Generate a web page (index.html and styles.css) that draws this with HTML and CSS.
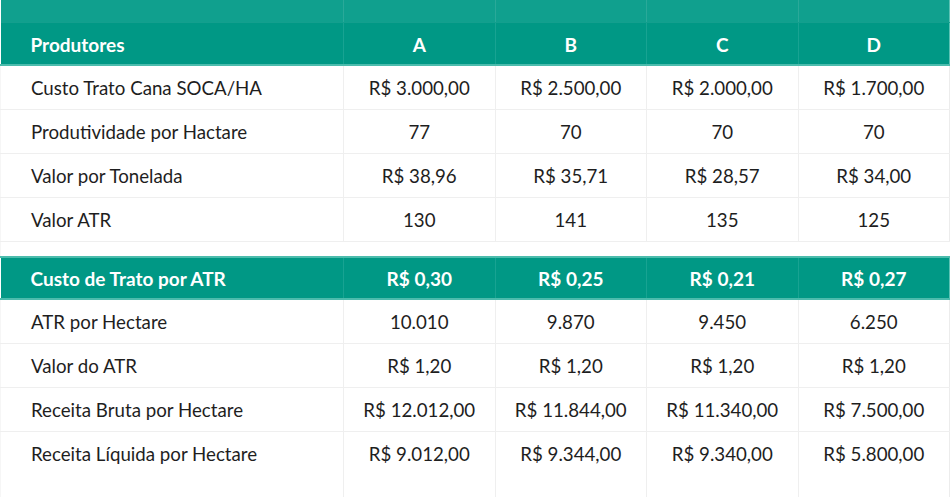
FILE: index.html
```html
<!DOCTYPE html>
<html lang="pt-BR">
<head>
<meta charset="utf-8">
<title>Tabela</title>
<link rel="stylesheet" href="styles.css">
</head>
<body>
<table class="grid">
  <colgroup>
    <col class="c-label">
    <col class="c-val">
    <col class="c-val">
    <col class="c-val">
    <col class="c-val">
  </colgroup>
  <tbody>
    <tr class="strip"><td></td><td></td><td></td><td></td><td></td></tr>
    <tr class="head head-top">
      <td class="label">Produtores</td><td>A</td><td>B</td><td>C</td><td>D</td>
    </tr>
    <tr><td class="label">Custo Trato Cana SOCA/HA</td><td>R$ 3.000,00</td><td>R$ 2.500,00</td><td>R$ 2.000,00</td><td>R$ 1.700,00</td></tr>
    <tr><td class="label">Produtividade por Hactare</td><td>77</td><td>70</td><td>70</td><td>70</td></tr>
    <tr><td class="label">Valor por Tonelada</td><td>R$ 38,96</td><td>R$ 35,71</td><td>R$ 28,57</td><td>R$ 34,00</td></tr>
    <tr class="end"><td class="label">Valor ATR</td><td>130</td><td>141</td><td>135</td><td>125</td></tr>
    <tr class="gap"><td colspan="5"></td></tr>
    <tr class="head head-mid">
      <td class="label">Custo de Trato por ATR</td><td>R$ 0,30</td><td>R$ 0,25</td><td>R$ 0,21</td><td>R$ 0,27</td>
    </tr>
    <tr><td class="label">ATR por Hectare</td><td>10.010</td><td>9.870</td><td>9.450</td><td>6.250</td></tr>
    <tr><td class="label">Valor do ATR</td><td>R$ 1,20</td><td>R$ 1,20</td><td>R$ 1,20</td><td>R$ 1,20</td></tr>
    <tr><td class="label">Receita Bruta por Hectare</td><td>R$ 12.012,00</td><td>R$ 11.844,00</td><td>R$ 11.340,00</td><td>R$ 7.500,00</td></tr>
    <tr class="last"><td class="label">Receita Líquida por Hectare</td><td>R$ 9.012,00</td><td>R$ 9.344,00</td><td>R$ 9.340,00</td><td>R$ 5.800,00</td></tr>
  </tbody>
</table>
</body>
</html>
```
FILE: styles.css
```css
html, body {
  margin: 0;
  padding: 0;
  background: #ffffff;
}

body {
  font-family: Lato, "Open Sans", sans-serif;
  color: #1e1e1e;
  overflow: hidden;
}

.grid {
  width: 949px;
  border-collapse: collapse;
  table-layout: fixed;
  font-size: 18.7px;
}

.c-label { width: 343px; }
.c-val { width: 151.5px; }

.grid td {
  height: 43px;
  padding: 0;
  text-align: center;
  vertical-align: middle;
  border-left: 1px solid #efefef;
  border-bottom: 1px solid #efefef;
  white-space: nowrap;
}

.grid td:first-child {
  border-left: 1px solid #f6f6f6;
}

.grid td:last-child {
  border-right: 1px solid #ececec;
}

.grid td.label {
  text-align: left;
  padding-left: 30px;
}

.strip td {
  height: 22px;
  background: #10a08e;
  border-left: 1px solid #2aa999;
  border-bottom: 1px solid #139f8e;
}

.head td {
  height: 42px;
  background: #009885;
  color: #ffffff;
  font-weight: 700;
  font-size: 19px;
  border-left: 1px solid #18a392;
  border-bottom: 2px solid #4cbcad;
}

.strip + .head td {
  height: 40px;
  padding-top: 1px;
}

.head-mid td {
  border-top: 2px solid #4cbcad;
  height: 40px;
}

.strip td:first-child,
.head td:first-child {
  border-left: none;
}

.grid .strip td:last-child,
.grid .head td:last-child {
  border-right: 1px solid #5cc2b4;
}

.gap td {
  height: 14px;
  border: none;
  background: #ffffff;
}

.grid .gap td:last-child {
  border-right: none;
}

.last td {
  height: 64px;
  vertical-align: top;
  padding-top: 11px;
  border-bottom: none;
}
```
